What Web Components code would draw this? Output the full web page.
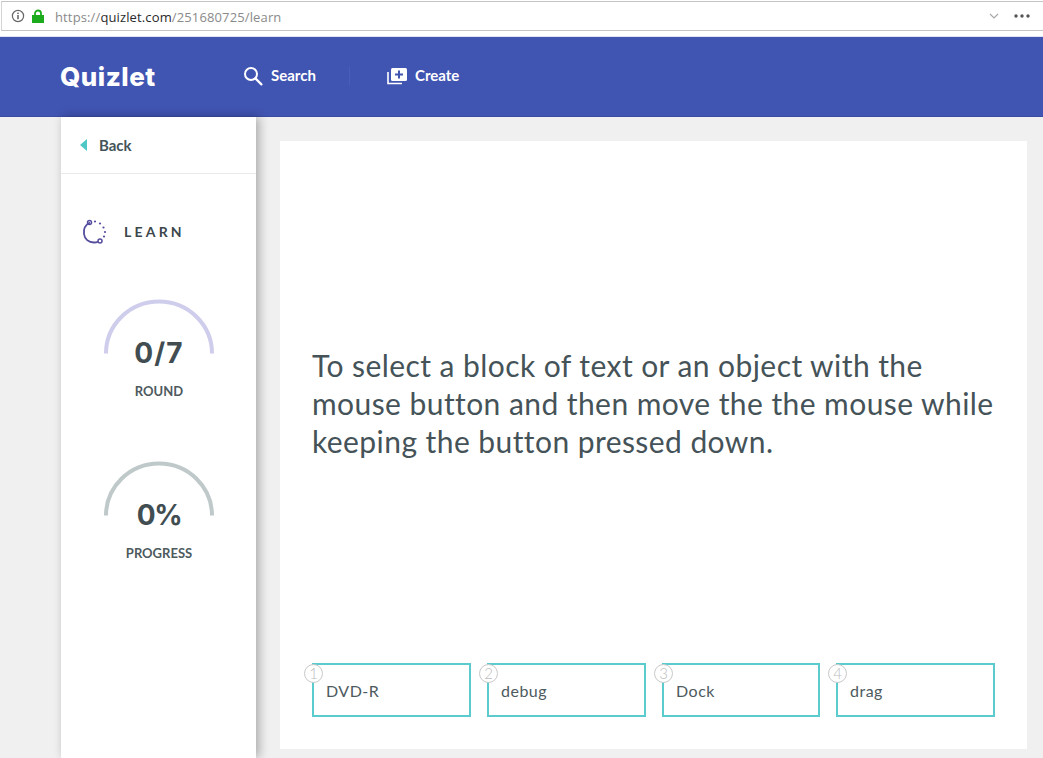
<!DOCTYPE html>
<html>
<head>
<meta charset="utf-8">
<title>Quizlet Learn</title>
<style>
  html, body { margin: 0; height: 100%; overflow: hidden; }
  body {
    background: #f0f0f0;
    font-family: "Lato", "Liberation Sans", sans-serif;
    color: #455358;
  }
  #page { display: flex; flex-direction: column; height: 758px; }
</style>
</head>
<body>
<div id="page">
  <browser-bar url-host="quizlet.com" url-path="/251680725/learn"></browser-bar>
  <site-header></site-header>
  <learn-layout>
    <side-panel slot="side">
      <gauge-stat value="0/7" label="ROUND" color="#cfcdec" spacing="1.2px"></gauge-stat>
      <gauge-stat value="0%" label="PROGRESS" color="#bfc9ca" spacing="-1.5px"></gauge-stat>
    </side-panel>
    <question-card slot="main">
      To select a block of text or an object with the mouse button and then move the the mouse while keeping the button pressed down.
      <answer-option slot="answers" num="1">DVD-R</answer-option>
      <answer-option slot="answers" num="2">debug</answer-option>
      <answer-option slot="answers" num="3">Dock</answer-option>
      <answer-option slot="answers" num="4">drag</answer-option>
    </question-card>
  </learn-layout>
</div>

<script>
class BrowserBar extends HTMLElement {
  constructor() {
    super();
    this.attachShadow({ mode: 'open' });
    const host = this.getAttribute('url-host');
    const path = this.getAttribute('url-path');
    this.shadowRoot.innerHTML = `
      <style>
        :host { display: block; height: 37px; box-sizing: border-box; background: #fff; padding-top: 1px; border-bottom: 1px solid #dfe3f3; flex: none; }
        .box {
          height: 30px; box-sizing: border-box; margin: 0 0 0 1px;
          border-top: 1px solid #c4c4c4; border-bottom: 1px solid #c4c4c4; border-left: 1px solid #d4d4d4;
          display: flex; align-items: center; padding: 0 13px 0 9px;
          font: 13px "Open Sans", "Liberation Sans", sans-serif; color: #8a8a8a;
        }
        .lock { margin: 0 11px 0 7px; }
        b { font-weight: 400; color: #2a2a2a; }
        .url { letter-spacing: .13px; margin-top: 2px; }
        .right { margin-left: auto; display: flex; align-items: center; gap: 15px; }
      </style>
      <div class="box">
        <svg width="14" height="14" viewBox="0 0 14 14">
          <circle cx="7" cy="7" r="5.6" fill="none" stroke="#666" stroke-width="1.2"/>
          <rect x="6.3" y="6" width="1.4" height="4.2" fill="#555"/>
          <rect x="6.3" y="3.6" width="1.4" height="1.4" fill="#555"/>
        </svg>
        <svg class="lock" width="12" height="14" viewBox="0 0 12 14">
          <path d="M3 7V4.5a3 3 0 0 1 6 0V7" fill="none" stroke="#1cab1c" stroke-width="1.8"/>
          <rect x="0" y="6" width="12" height="8" fill="#1cab1c"/>
        </svg>
        <span class="url">https://<b>${host}</b>${path}</span>
        <span class="right">
          <svg width="10" height="6" viewBox="0 0 10 6"><path d="M1 1l4 4 4-4" fill="none" stroke="#a8a8a8" stroke-width="1.2"/></svg>
          <svg width="16" height="4" viewBox="0 0 16 4">
            <circle cx="2" cy="2" r="1.7" fill="#555"/><circle cx="8" cy="2" r="1.7" fill="#555"/><circle cx="14" cy="2" r="1.7" fill="#555"/>
          </svg>
        </span>
      </div>
    `;
  }
}

class SiteHeader extends HTMLElement {
  constructor() {
    super();
    this.attachShadow({ mode: 'open' });
    this.shadowRoot.innerHTML = `
      <style>
        :host { display: flex; align-items: center; height: 80px; box-sizing: border-box; flex: none; background: #4054b2; color: #fff; padding: 0 0 2px 60px; font-family: "Lato", "Liberation Sans", sans-serif; border-bottom: 1px solid #3a4ca3; }
        .logo { font: 800 26px "Inter", "Liberation Sans", sans-serif; letter-spacing: .5px; width: 183px; margin-top: 2px; }
        .item { display: flex; align-items: center; font-size: 15px; font-weight: 700; line-height: 18px; }
        .item span { margin-bottom: 2px; }
        .search { gap: 8px; width: 106px; }
        .sep { width: 1px; height: 18px; background: #4a5dbb; margin-right: 37px; }
        .create { gap: 7px; }
      </style>
      <div class="logo">Quizlet</div>
      <div class="item search">
        <svg width="20" height="20" viewBox="0 0 20 20">
          <circle cx="8" cy="8" r="6" fill="none" stroke="#fff" stroke-width="2"/>
          <path d="M12.4 12.4l6 6" stroke="#fff" stroke-width="2.2" stroke-linecap="round"/>
        </svg>
        <span>Search</span>
      </div>
      <div class="sep"></div>
      <div class="item create">
        <svg width="21" height="18" viewBox="0 0 21 18">
          <path d="M1 5v11.5h14" fill="none" stroke="#fff" stroke-width="1.6"/>
          <rect x="4" y="1" width="16" height="13" rx="1.5" fill="#fff"/>
          <path d="M12 3.5v8M8 7.5h8" stroke="#4054b2" stroke-width="2"/>
        </svg>
        <span>Create</span>
      </div>
    `;
  }
}

class LearnLayout extends HTMLElement {
  constructor() {
    super();
    this.attachShadow({ mode: 'open' });
    this.shadowRoot.innerHTML = `
      <style>
        :host { display: flex; flex: 1; min-height: 0; padding: 0 16px 9px 61px; gap: 24px; }
        ::slotted([slot=side]) { margin-bottom: -9px; }
      </style>
      <slot name="side"></slot>
      <slot name="main"></slot>
    `;
  }
}

class SidePanel extends HTMLElement {
  constructor() {
    super();
    this.attachShadow({ mode: 'open' });
    this.shadowRoot.innerHTML = `
      <style>
        :host { display: block; width: 195px; flex: none; background: #fff; box-shadow: 3px 0 10px rgba(0,0,0,.3); position: relative; }
        .back { height: 57px; box-sizing: border-box; display: flex; align-items: center; padding: 0 0 0 19px; gap: 11px; border-bottom: 1px solid #e9eaea; font-size: 15px; font-weight: 700; color: #455358; }
        .mode { display: flex; align-items: center; gap: 16px; padding: 44px 0 0 21px; height: 27px; }
        .mode span { font: 700 14px "Lato", "Liberation Sans", sans-serif; letter-spacing: 3.2px; color: #3c474c; }
        .gauges { display: flex; flex-direction: column; gap: 41px; margin-top: 54px; }
      </style>
      <div class="back">
        <svg width="8" height="12" viewBox="0 0 8 12"><path d="M7 0v12L0 6z" fill="#4fc8c5"/></svg>
        Back
      </div>
      <div class="mode">
        <svg width="26" height="28" viewBox="0 0 26 28">
          <path d="M8 4.5C3 7 1.5 12 2 16c.6 5 4.500 8.500 10 8.500 1.500 0 3-.3 4-.8" fill="none" stroke="#544d9e" stroke-width="1.800"/>
          <circle cx="7.500" cy="4.500" r="2" fill="none" stroke="#544d9e" stroke-width="1.500"/>
          <circle cx="18" cy="23" r="2" fill="none" stroke="#544d9e" stroke-width="1.500"/>
          <circle cx="13" cy="3.500" r="1.100" fill="#544d9e"/><circle cx="18" cy="5.500" r="1.100" fill="#544d9e"/>
          <circle cx="21.500" cy="9.500" r="1.100" fill="#544d9e"/><circle cx="23" cy="14" r="1.100" fill="#544d9e"/><circle cx="22" cy="18.500" r="1.100" fill="#544d9e"/>
        </svg>
        <span>LEARN</span>
      </div>
      <div class="gauges"><slot></slot></div>
    `;
  }
}

class GaugeStat extends HTMLElement {
  constructor() {
    super();
    this.attachShadow({ mode: 'open' });
    const value = this.getAttribute('value');
    const label = this.getAttribute('label');
    const color = this.getAttribute('color');
    const spacing = this.getAttribute('spacing');
    this.shadowRoot.innerHTML = `
      <style>
        :host { display: flex; flex-direction: column; align-items: center; width: 196px; height: 121px; position: relative; }
        svg { display: block; }
        /* number sits inside the arc */
        .value { position: absolute; top: 36px; left: 0; right: 0; text-align: center; font: 700 28px "Inter", "Liberation Sans", sans-serif; letter-spacing: ${spacing}; color: #414d51; line-height: 36px; }
        .label { margin-top: 28px; font-size: 13px; font-weight: 700; color: #4d5a5e; line-height: 16px; }
      </style>
      <svg width="112" height="56" viewBox="0 0 112 56">
        <path d="M3 54.500a53 52 0 0 1 106 0" fill="none" stroke="${color}" stroke-width="4"/>
      </svg>
      <div class="value">${value}</div>
      <div class="label">${label}</div>
    `;
  }
}

class QuestionCard extends HTMLElement {
  constructor() {
    super();
    this.attachShadow({ mode: 'open' });
    this.shadowRoot.innerHTML = `
      <style>
        :host { display: flex; flex-direction: column; width: 747px; flex: none; margin-top: 24px; background: #fff; box-sizing: border-box; padding: 0 32px 32px; }
        .prompt { flex: 1; display: flex; align-items: center; padding-top: 2px; font: 30px/38px "Lato", "Liberation Sans", sans-serif; letter-spacing: .43px; color: #455358; height: 522px; box-sizing: border-box; }
        .answers { display: grid; grid-template-columns: 159px 159px 158px 159px; gap: 16px; }
      </style>
      <div class="prompt"><div><slot></slot></div></div>
      <div class="answers"><slot name="answers"></slot></div>
    `;
  }
}

class AnswerOption extends HTMLElement {
  constructor() {
    super();
    this.attachShadow({ mode: 'open' });
    const num = this.getAttribute('num');
    this.shadowRoot.innerHTML = `
      <style>
        :host { display: flex; align-items: center; height: 54px; box-sizing: border-box; border: 2px solid #5ccbce; padding: 0 0 0 12px; position: relative; font: 16px "Lato", "Liberation Sans", sans-serif; letter-spacing: .5px; color: #4d5a5e; }
        .num { position: absolute; left: -10px; top: -1px; width: 17px; height: 17px; border: 1.500px solid #c8c8c8; border-radius: 50%; background: #fff; color: #bcbcbc; font-size: 15px; font-weight: 300; letter-spacing: 0; line-height: 17px; text-align: center; }
      </style>
      <span class="num">${num}</span>
      <slot></slot>
    `;
  }
}

customElements.define('browser-bar', BrowserBar);
customElements.define('site-header', SiteHeader);
customElements.define('learn-layout', LearnLayout);
customElements.define('side-panel', SidePanel);
customElements.define('gauge-stat', GaugeStat);
customElements.define('question-card', QuestionCard);
customElements.define('answer-option', AnswerOption);
</script>
</body>
</html>
